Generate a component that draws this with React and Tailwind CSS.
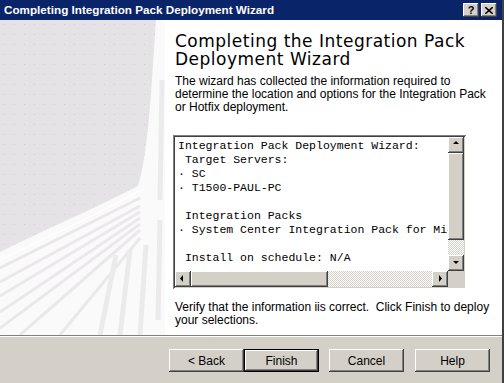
import React from 'react';

const raised = 'bg-[#d4d0c8] shadow-[inset_-1px_-1px_#404040,inset_1px_1px_#ffffff,inset_-2px_-2px_#808080,inset_2px_2px_#d4d0c8]';
const checker = 'bg-[image:repeating-conic-gradient(#d4d0c8_0_25%,#ffffff_0_50%)] bg-[length:2px_2px]';

const Arrow = ({ dir }) => {
  const pts = {
    up: '4,6 7,3 10,6',
    down: '4,5 10,5 7,8',
    left: '7,3 7,10 4,6.5',
    right: '6,3 6,10 9,6.5',
  }[dir];
  return (
    <svg width="14" height="14" viewBox="0 0 14 14">
      <polygon points={pts} fill="#000" />
    </svg>
  );
};

const ScrollBtn = ({ dir }) => (
  <div className={`w-[16px] h-[16px] flex items-center justify-center shrink-0 ${raised}`}>
    <Arrow dir={dir} />
  </div>
);

const LeftArt = () => (
  <svg width="165" height="315" viewBox="0 0 165 315" className="block">
    <defs>
      <pattern id="dots" width="10" height="10" patternUnits="userSpaceOnUse">
        <rect x="4" y="4" width="1" height="1" fill="#d2ced2" />
      </pattern>
      <clipPath id="blob">
        <path d="M0,0 H156 C151,70 149,130 138,166 C100,186 40,212 0,232 Z" />
      </clipPath>
    </defs>
    <rect width="165" height="315" fill="#fbfafb" />
    <path d="M0,0 H156 C151,70 149,130 138,166 C100,186 40,212 0,232 Z" fill="#e6e3e6" />
    <rect width="165" height="315" fill="url(#dots)" clipPath="url(#blob)" />
    {/* perspective streaks */}
    <g stroke="#ebe8eb" strokeWidth="3" fill="none">
      <path d="M0,248 L140,178" />
      <path d="M0,262 L140,186" />
      <path d="M0,276 L140,192" />
      <path d="M0,292 L140,198" />
      <path d="M0,308 L140,204" />
      <path d="M20,315 L140,210" />
      <path d="M60,315 L140,218" />
    </g>
    <g stroke="#ecebec" strokeWidth="5" fill="none">
      <path d="M120,315 L130,230" />
      <path d="M140,315 L146,225" />
      <path d="M100,315 L116,235" />
      <path d="M158,300 L160,200" />
      <path d="M160,180 L162,60" />
    </g>
    <path d="M0,240 C50,215 110,190 140,170" stroke="#ffffff" strokeWidth="1.5" fill="none" />
  </svg>
);

const Btn = ({ children, def }) => (
  <div
    className={`w-[75px] h-[23px] flex items-center justify-center text-[12px] text-black ${
      def
        ? 'bg-[#d4d0c8] border border-black shadow-[inset_-1px_-1px_#404040,inset_1px_1px_#ffffff,inset_-2px_-2px_#808080]'
        : raised
    }`}
  >
    {children}
  </div>
);

const lines = [
  'Integration Pack Deployment Wizard:',
  ' Target Servers:',
  '\u00b7 SC',
  '\u00b7 T1500-PAUL-PC',
  '',
  ' Integration Packs',
  '\u00b7 System Center Integration Pack for Microsoft .NET',
  '',
  ' Install on schedule: N/A',
];

export default function App() {
  return (
    <div className="w-[504px] h-[383px] flex flex-col bg-[#d4d0c8] overflow-hidden font-['Liberation_Sans',Arial,sans-serif] border-r-2 border-r-[#404040]">
      {/* Title bar */}
      <div className="h-[20px] shrink-0 bg-[#0a246a] flex items-center pl-[4px] pr-[5px]">
        <span className="text-white text-[11.7px] font-bold flex-1">
          Completing Integration Pack Deployment Wizard
        </span>
        <div className={`w-[16px] h-[14px] flex items-center justify-center text-[11px] font-bold text-black ${raised}`}>?</div>
        <div className={`w-[16px] h-[14px] ml-[2px] flex items-center justify-center ${raised}`}>
          <svg width="8" height="7" viewBox="0 0 8 7">
            <path d="M0,0 L8,7 M8,0 L0,7" stroke="#000" strokeWidth="1.6" />
          </svg>
        </div>
      </div>

      {/* Body */}
      <div className="h-[315px] shrink-0 flex bg-white">
        <LeftArt />
        <div className="flex-1 pl-[10px] flex flex-col">
          <h1 className="mt-[12px] text-[17px] leading-[18px] text-black tracking-[0.5px] font-['DejaVu_Sans',Verdana,sans-serif]">
            Completing the Integration Pack
            <br />
            Deployment Wizard
          </h1>
          <p className="mt-[7px] text-[12px] leading-[13px] text-black">
            The wizard has collected the information required to
            <br />
            determine the location and options for the Integration Pack
            <br />
            or Hotfix deployment.
          </p>

          {/* Summary box */}
          <div className="mt-[21px] -ml-[2px] w-[293px] h-[154px] bg-white shadow-[inset_1px_1px_#808080,inset_-1px_-1px_#ffffff,inset_2px_2px_#404040,inset_-2px_-2px_#d4d0c8] p-[2px] flex flex-col">
            <div className="flex-1 flex min-h-0">
              <div className="flex-1 overflow-hidden pt-[2px] pl-[3px] font-['Liberation_Mono','Courier_New',monospace] text-[11.5px] leading-[14px] text-black whitespace-pre">
                {lines.map((l, i) => (
                  <div key={i} className="h-[14px]">{l}</div>
                ))}
              </div>
              <div className="w-[16px] flex flex-col">
                <ScrollBtn dir="up" />
                <div className={`h-[87px] ${raised}`} />
                <div className={`flex-1 ${checker}`} />
                <ScrollBtn dir="down" />
              </div>
            </div>
            <div className="h-[16px] flex">
              <ScrollBtn dir="left" />
              <div className={`w-[137px] ${raised}`} />
              <div className={`flex-1 ${checker}`} />
              <ScrollBtn dir="right" />
              <div className="w-[16px] bg-[#d4d0c8]" />
            </div>
          </div>

          <p className="mt-[12px] text-[12px] leading-[13px] text-black">
            Verify that the information iis correct.&nbsp; Click Finish to deploy
            <br />
            your selections.
          </p>
        </div>
      </div>

      {/* Button bar */}
      <div className="flex-1 border-t border-t-[#808080] shadow-[inset_0_1px_#ffffff] flex items-start pt-[13px] pl-[169px]">
        <Btn>&lt; Back</Btn>
        <Btn def>Finish</Btn>
        <div className="w-[10px]" />
        <Btn>Cancel</Btn>
        <div className="w-[11px]" />
        <Btn>Help</Btn>
      </div>
    </div>
  );
}
